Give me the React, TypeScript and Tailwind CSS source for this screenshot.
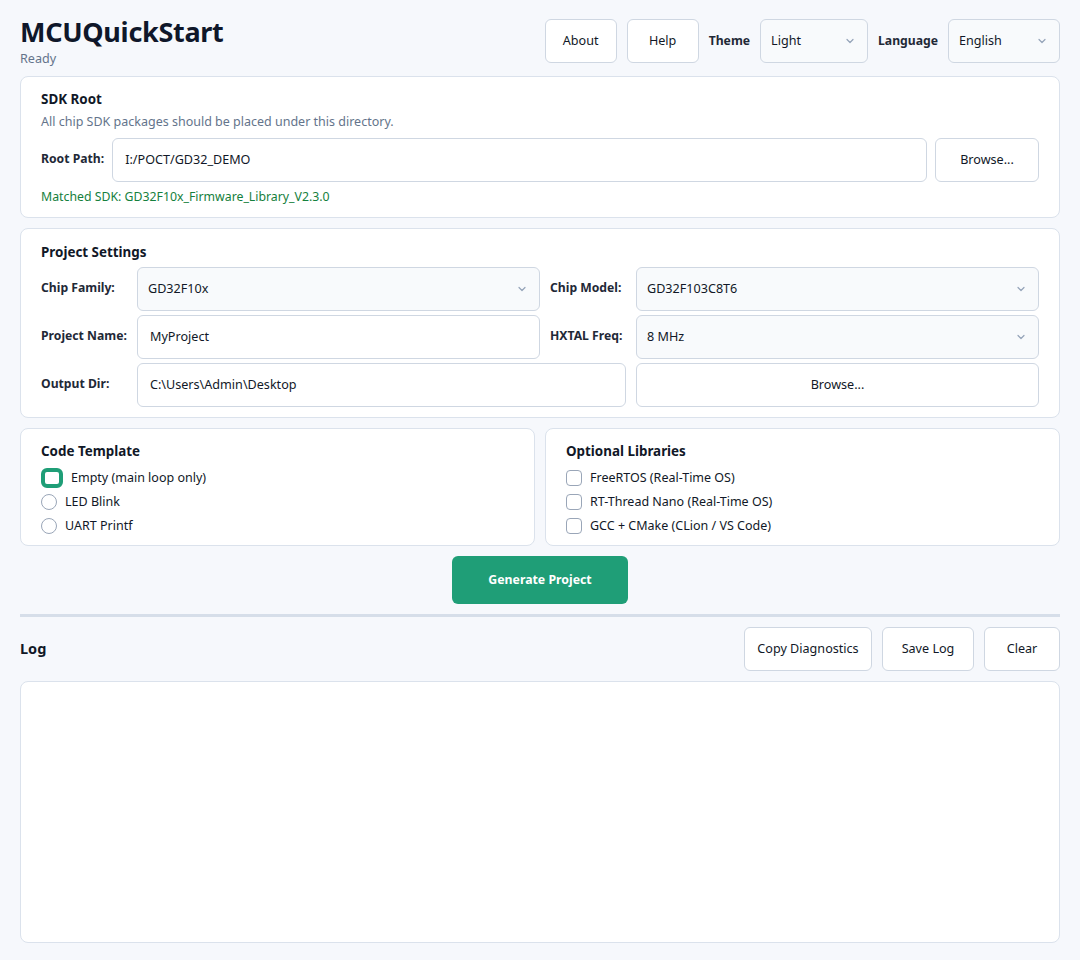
import React from "react";

const font = { fontFamily: '"Noto Sans", "Open Sans", Arial, sans-serif' };

function Chevron() {
  return (
    <svg width="10" height="10" viewBox="0 0 10 10" className="text-[#94a3b8]">
      <path d="M2 3.5 L5 6.5 L8 3.5" fill="none" stroke="currentColor" strokeWidth="1.2" strokeLinecap="round" strokeLinejoin="round" />
    </svg>
  );
}

function Select({ value, className = "" }: { value: string; className?: string }) {
  return (
    <div className={`h-[44px] flex items-center justify-between rounded-[6px] border border-[#cfd7e2] bg-[#f8fafc] pl-[10px] pr-[12px] text-[12.6px] text-[#111827] ${className}`}>
      <span>{value}</span>
      <Chevron />
    </div>
  );
}

function Input({ value, className = "" }: { value: string; className?: string }) {
  return (
    <div className={`h-[44px] flex items-center rounded-[6px] border border-[#cfd7e2] bg-white pl-[12px] text-[12.6px] text-[#111827] ${className}`}>
      {value}
    </div>
  );
}

function Button({ children, className = "" }: { children: React.ReactNode; className?: string }) {
  return (
    <div className={`h-[44px] flex items-center justify-center rounded-[6px] border border-[#cfd7e2] bg-white text-[12.6px] text-[#111827] ${className}`}>
      {children}
    </div>
  );
}

function Label({ children }: { children: React.ReactNode }) {
  return <div className="text-[12.2px] font-bold text-[#1f2937] self-start pt-[12px] whitespace-nowrap">{children}</div>;
}

export default function App() {
  return (
    <div style={font} className="min-h-[960px] w-[1080px] bg-[#f6f8fc] px-[20px] pt-[14px] text-[#111827]">
      {/* Header */}
      <div className="flex items-start justify-between">
        <div>
          <div className="text-[27px] font-bold leading-[36px] tracking-[-0.3px] text-[#0f172a]">MCUQuickStart</div>
          <div className="text-[12.6px] leading-[18px] text-[#64748b]">Ready</div>
        </div>
        <div className="mt-[5px] flex items-center gap-[10px]">
          <Button className="w-[72px]">About</Button>
          <Button className="w-[72px]">Help</Button>
          <span className="text-[12.2px] font-bold text-[#1f2937]">Theme</span>
          <Select value="Light" className="w-[108px]" />
          <span className="text-[12.2px] font-bold text-[#1f2937]">Language</span>
          <Select value="English" className="w-[112px]" />
        </div>
      </div>

      {/* SDK Root */}
      <div className="mt-[8px] rounded-[8px] border border-[#dbe2ec] bg-white px-[20px] pt-[11px] pb-[10px]">
        <div className="text-[13.4px] font-bold leading-[22px]">SDK Root</div>
        <div className="mt-[2px] text-[12.5px] leading-[20px] text-[#64748b]">All chip SDK packages should be placed under this directory.</div>
        <div className="mt-[6px] flex items-start gap-[8px]">
          <Label>Root Path:</Label>
          <Input value="I:/POCT/GD32_DEMO" className="flex-1" />
          <Button className="w-[104px]">Browse...</Button>
        </div>
        <div className="mt-[5px] text-[12.3px] leading-[20px] text-[#15803d]">Matched SDK: GD32F10x_Firmware_Library_V2.3.0</div>
      </div>

      {/* Project Settings */}
      <div className="mt-[10px] rounded-[8px] border border-[#dbe2ec] bg-white px-[20px] pt-[12px] pb-[10px]">
        <div className="text-[13.4px] font-bold leading-[22px]">Project Settings</div>
        <div className="mt-[4px] grid grid-cols-[86px_1fr_76px_1fr] gap-x-[10px] gap-y-[4px]">
          <Label>Chip Family:</Label>
          <Select value="GD32F10x" />
          <Label>Chip Model:</Label>
          <Select value="GD32F103C8T6" />
          <Label>Project Name:</Label>
          <Input value="MyProject" />
          <Label>HXTAL Freq:</Label>
          <Select value="8 MHz" />
          <Label>Output Dir:</Label>
          <Input value="C:\Users\Admin\Desktop" className="col-span-2" />
          <Button>Browse...</Button>
        </div>
      </div>

      {/* Template / Libraries */}
      <div className="mt-[10px] grid grid-cols-2 gap-[10px]">
        <div className="rounded-[8px] border border-[#dbe2ec] bg-white px-[20px] pt-[11px] pb-[7px]">
          <div className="text-[13.4px] font-bold leading-[22px]">Code Template</div>
          <div className="mt-[4px] flex h-[24px] items-center gap-[8px]">
            <span className="h-[20px] w-[22px] rounded-[6px] border-[4px] border-[#1f9e77] bg-white" />
            <span className="text-[12.5px]">Empty (main loop only)</span>
          </div>
          <div className="flex h-[24px] items-center gap-[8px]">
            <span className="h-[16px] w-[16px] rounded-full border border-[#9aa6b8] bg-white" />
            <span className="text-[12.5px]">LED Blink</span>
          </div>
          <div className="flex h-[24px] items-center gap-[8px]">
            <span className="h-[16px] w-[16px] rounded-full border border-[#9aa6b8] bg-white" />
            <span className="text-[12.5px]">UART Printf</span>
          </div>
        </div>
        <div className="rounded-[8px] border border-[#dbe2ec] bg-white px-[20px] pt-[11px] pb-[7px]">
          <div className="text-[13.4px] font-bold leading-[22px]">Optional Libraries</div>
          <div className="mt-[4px]">
            {["FreeRTOS (Real-Time OS)", "RT-Thread Nano (Real-Time OS)", "GCC + CMake (CLion / VS Code)"].map((t) => (
              <div key={t} className="flex h-[24px] items-center gap-[8px]">
                <span className="h-[16px] w-[16px] rounded-[4px] border border-[#9aa6b8] bg-white" />
                <span className="text-[12.5px]">{t}</span>
              </div>
            ))}
          </div>
        </div>
      </div>

      {/* Generate */}
      <div className="mt-[10px] flex justify-center">
        <div className="flex h-[48px] w-[176px] items-center justify-center rounded-[6px] bg-[#1f9e77] text-[12.3px] font-bold text-white">
          Generate Project
        </div>
      </div>

      <div className="mt-[10px] h-[3px] bg-[#d6dee9]" />

      {/* Log */}
      <div className="mt-[10px] flex items-center justify-between">
        <div className="text-[14.5px] font-bold">Log</div>
        <div className="flex gap-[10px]">
          <Button className="w-[128px]">Copy Diagnostics</Button>
          <Button className="w-[92px]">Save Log</Button>
          <Button className="w-[76px]">Clear</Button>
        </div>
      </div>

      <div className="mt-[10px] h-[262px] rounded-[8px] border border-[#dbe2ec] bg-white" />
    </div>
  );
}
